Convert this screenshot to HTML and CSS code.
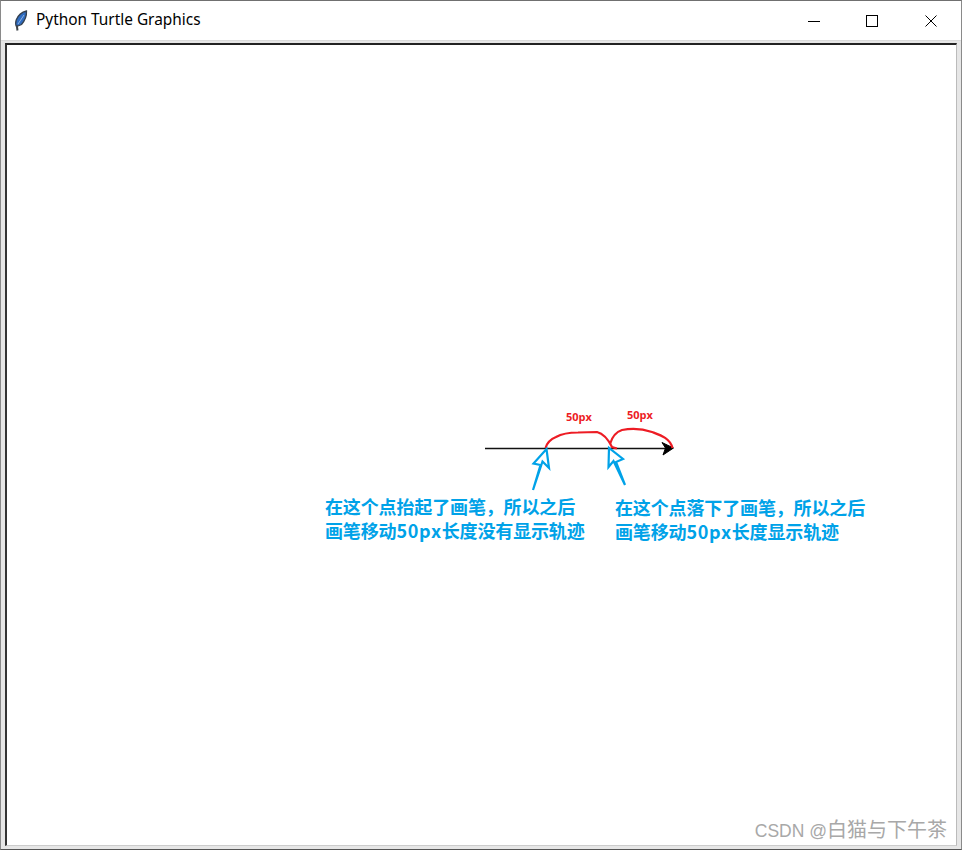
FILE: index.html
```html
<!DOCTYPE html>
<html lang="en">
<head>
    <meta charset="UTF-8">
    <meta name="viewport" content="width=device-width, initial-scale=1.0">
    <title>Python Turtle Graphics</title>
    <link rel="stylesheet" href="styles.css">
</head>
<body>
    <div class="window">
        <div class="titlebar">
            <svg class="app-icon" width="16" height="22" viewBox="0 0 16 22">
                <path d="M13.500 1C9 2 5 5.500 3.200 10C2.500 12.500 2.500 15 3.500 16.500L8.500 14.500C11.500 11 13.800 6 13.500 1Z" fill="#2f6cc0" stroke="#34404f" stroke-width="1.300"/>
                <path d="M11 5L5 14" stroke="#8fb4e4" stroke-width="1"/>
                <path d="M3.800 15.500L4.500 20.500" stroke="#3f444a" stroke-width="2"/>
            </svg>
            <span class="title">Python Turtle Graphics</span>
            <div class="controls">
                <button class="control">
                    <svg width="12" height="12" viewBox="0 0 12 12"><path d="M0 6.500H12" stroke="#000" stroke-width="1"/></svg>
                </button>
                <button class="control">
                    <svg width="12" height="12" viewBox="0 0 12 12"><rect x="0.500" y="0.500" width="11" height="11" fill="none" stroke="#000" stroke-width="1"/></svg>
                </button>
                <button class="control">
                    <svg width="12" height="12" viewBox="0 0 12 12"><path d="M0.500 0.500L11.500 11.500M11.500 0.500L0.500 11.500" stroke="#000" stroke-width="1"/></svg>
                </button>
            </div>
        </div>
        <div class="frame">
            <div class="canvas">
                <svg class="drawing" width="949" height="801" viewBox="7 45 949 801">
                    <path d="M485 448.500H666" stroke="#111" stroke-width="1.700" fill="none"/>
                    <path d="M662 442.500L673.500 448L663 455L665.500 448Z" fill="#000" stroke="#000" stroke-width="1"/>
                    <path d="M545.500 448C547 443 551 439 556 437C563 433 570 432.500 578 432.500L597 432C603 433.500 608 439 612 447L617 448.500" stroke="#ed1c24" stroke-width="2.200" fill="none"/>
                    <path d="M610 444C612 437 616 432 622 430C630 428.500 640 428 652 432C660 435 670 438 672.500 448" stroke="#ed1c24" stroke-width="2.200" fill="none"/>
                    <path d="M533 490L540.500 465L533.500 463.500L546.500 449L549 468L542.500 461.500L533 490" stroke="#00a2e8" stroke-width="2.200" fill="none"/>
                    <path d="M625 485L613.500 461L608.500 467L609 448L623 459L616 462L625 485" stroke="#00a2e8" stroke-width="2.200" fill="none"/>
                </svg>
                <div class="label label-px label-px-left">50px</div>
                <div class="label label-px label-px-right">50px</div>
                <div class="label note note-left">在这个点抬起了画笔，所以之后<br>画笔移动<span class="note-latin">50px</span>长度没有显示轨迹</div>
                <div class="label note note-right">在这个点落下了画笔，所以之后<br>画笔移动<span class="note-latin">50px</span>长度显示轨迹</div>
                <div class="watermark"><span class="watermark-latin">CSDN @</span>白猫与下午茶</div>
            </div>
        </div>
    </div>
</body>
</html>
```

FILE: styles.css
```css
body {
    margin: 0;
    background-color: #fff;
    font-family: "Noto Sans", "Noto Sans CJK SC", sans-serif;
}
.window {
    width: 962px;
    height: 850px;
    box-sizing: border-box;
    display: flex;
    flex-direction: column;
    border-top: 1px solid #707070;
    border-left: 1px solid #8a8a8a;
    border-right: 1px solid #8a8a8a;
    border-bottom: 1px solid #555;
}
.titlebar {
    height: 39px;
    flex: none;
    display: flex;
    align-items: center;
    padding-left: 12px;
    background-color: #fff;
}
.app-icon {
    margin-right: 7px;
}
.title {
    font-size: 15.400px;
    line-height: 20px;
    margin-bottom: 2px;
    color: #000;
    flex: 1;
}
.controls {
    display: flex;
    padding-right: 1px;
}
.control {
    width: 58.500px;
    height: 39px;
    padding: 0;
    border: none;
    background: none;
    display: flex;
    align-items: center;
    justify-content: center;
}
.frame {
    flex: 1;
    display: flex;
    padding: 2px 4px 3px 4px;
    background-color: #e6e6e6;
    border-top: 1px solid #dadada;
}
.canvas {
    flex: 1;
    position: relative;
    background-color: #fff;
    border-top: 2px solid #222;
    border-left: 2px solid #333;
    border-right: 1px solid #bbb;
    border-bottom: 1px solid #ccc;
}
.drawing {
    position: absolute;
    left: 0;
    top: 0;
}
.label {
    position: absolute;
    font-family: "Noto Sans CJK SC", sans-serif;
    font-weight: 700;
    white-space: nowrap;
}
.label-px {
    font-family: "Open Sans", sans-serif;
    font-size: 11px;
    line-height: 14px;
    color: #ed1c24;
}
.label-px-left {
    left: 559px;
    top: 365px;
}
.label-px-right {
    left: 620px;
    top: 363px;
}
.note {
    font-size: 18px;
    line-height: 24px;
    letter-spacing: -0.140px;
    color: #00a2e8;
}
.note-latin {
    letter-spacing: 0.700px;
}
.note-left {
    left: 318px;
    top: 449px;
}
.note-right {
    left: 608px;
    top: 450px;
}
.watermark {
    position: absolute;
    right: 9px;
    bottom: 0;
    font-family: "Noto Sans CJK SC", sans-serif;
    font-size: 20px;
    line-height: 28px;
    color: #a8a8a8;
    white-space: nowrap;
}
.watermark-latin {
    font-family: "Liberation Sans", sans-serif;
    font-size: 17.500px;
}
```
